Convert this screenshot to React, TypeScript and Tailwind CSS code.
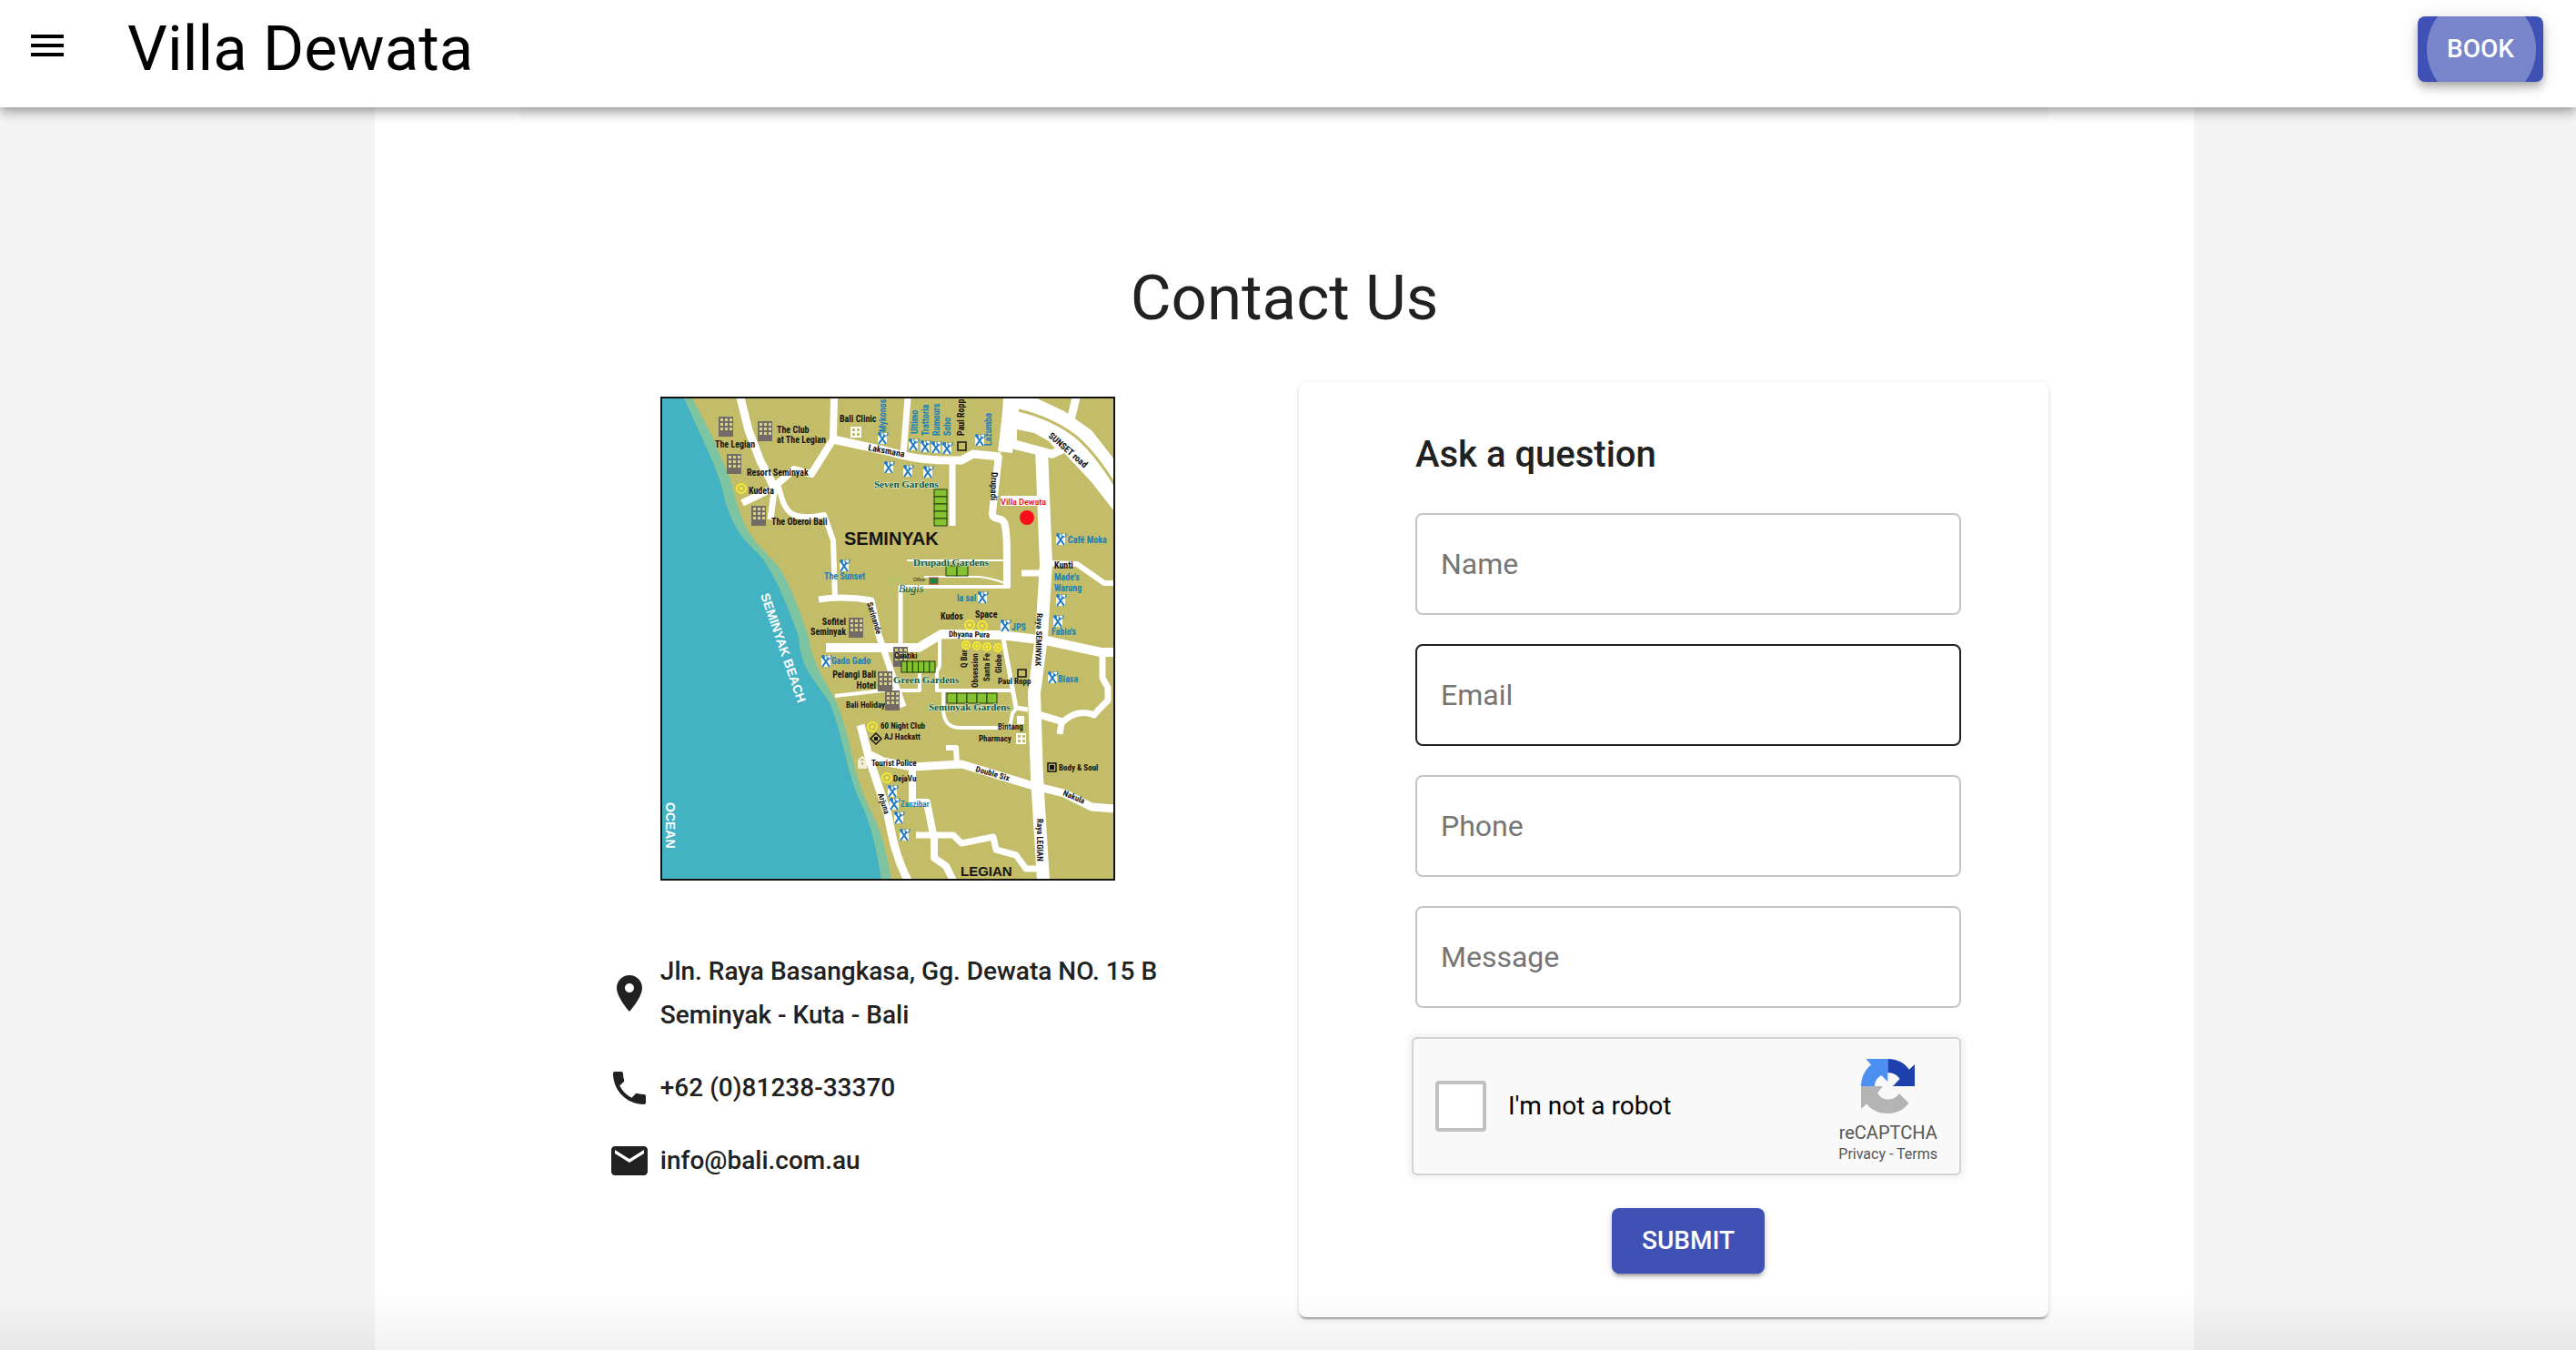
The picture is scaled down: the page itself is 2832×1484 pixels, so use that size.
import type { ReactNode } from "react";

const OLIVE = "#c3bc68";
const BLUE = "#1c7fb8";
const GREEN = "#0f5a44";
const BLACK = "#161412";

const ROADS: { d: string; w: number }[] = [
  { d: "M88 1L97 37L110 71L125 99", w: 9 },
  { d: "M90 117L123 101", w: 8 },
  { d: "M126 97L121 135", w: 7 },
  { d: "M130 99C134 116 138 128 150 131C158 133 166 133 180 130L190 158L192 222", w: 6 },
  { d: "M125 99L147 80L166 85L190 47L191 1", w: 8 },
  { d: "M174 223C192 220 210 220 232 224L240 262L267 341", w: 7 },
  { d: "M190 47L250 60C270 66 290 71 331 70L344 63L374 66", w: 9 },
  { d: "M272 1L267 64", w: 7 },
  { d: "M321 72V142", w: 7 },
  { d: "M386 1L379 61", w: 16 },
  { d: "M372 64L365 128C365 138 377 130 379 142C381 152 381 160 381 210", w: 8 },
  { d: "M271 180H379", w: 2 },
  { d: "M290 198H350C362 199 370 202 379 205", w: 2 },
  { d: "M262 209H384", w: 4 },
  { d: "M264 209V276", w: 5 },
  { d: "M457 1L450 30", w: 9 },
  { d: "M419 58L424 184L419 264L411 326L414 419L421 532", w: 14 },
  { d: "M424 183L458 184L488 205H499", w: 6 },
  { d: "M397 194H420", w: 7 },
  { d: "M182 276H284L309 261L374 262L424 268L484 281H499", w: 10 },
  { d: "M486 284V309L492 320V334L480 346L477 350C462 344 450 350 441 359L439 371", w: 7 },
  { d: "M414 349L441 357", w: 8 },
  { d: "M307 264V296L304 302V323H387", w: 4 },
  { d: "M377 266L391 342L404 344", w: 5 },
  { d: "M311 323V342C311 358 318 364 330 364H384L387 348L392 342", w: 4 },
  { d: "M285 304V323H244L192 329", w: 4 },
  { d: "M220 361L230 399L250 459C255 486 259 506 272 532", w: 9 },
  { d: "M231 394L245 401L277 407L331 404L407 427L444 436L474 451L499 453", w: 9 },
  { d: "M314 386H325L326 404", w: 6 },
  { d: "M277 409V446H293L301 486V507L314 516L322 532", w: 8 },
  { d: "M281 482H322L331 491L366 484L369 498L391 504L402 519H420", w: 7 },
];

const BUILDINGS = [
  [64, 22], [107, 27], [73, 63], [100, 120], [207, 243], [239, 302], [247, 323],
];

const RESTAURANTS = [
  [244, 46], [251, 78], [272, 82], [294, 83], [278, 53], [291, 55], [303, 56],
  [315, 57], [351, 48], [202, 186], [440, 157], [354, 221], [379, 252], [440, 224],
  [437, 247], [182, 291], [431, 309], [255, 434], [257, 448], [262, 463], [268, 482],
];

const CLUBS = [
  [89, 101, 5], [340, 251, 5], [354, 252, 5], [336, 273, 4], [348, 274, 4],
  [359, 275, 4], [371, 276, 4], [233, 363, 5], [249, 419, 5],
];

type Label = {
  t: string;
  x: number;
  y: number;
  c?: string;
  r?: number;
  s?: number;
  a?: "start" | "middle" | "end";
};

const LABELS: Label[] = [
  { t: "The Legian", x: 60, y: 56 },
  { t: "The Club", x: 128, y: 40 },
  { t: "at The Legian", x: 128, y: 51 },
  { t: "Resort Seminyak", x: 95, y: 87 },
  { t: "Kudeta", x: 97, y: 107 },
  { t: "The Oberoi Bali", x: 122, y: 141 },
  { t: "Bali Clinic", x: 197, y: 28 },
  { t: "Laksmana", x: 228, y: 59, r: 11 },
  { t: "Mykonos", x: 248, y: 39, r: -90, c: BLUE },
  { t: "Ultimo", x: 283, y: 41, r: -90, c: BLUE },
  { t: "Trattoria", x: 295, y: 43, r: -90, c: BLUE },
  { t: "Rumours", x: 307, y: 43, r: -90, c: BLUE },
  { t: "Soho", x: 319, y: 43, r: -90, c: BLUE },
  { t: "Paul Ropp", x: 334, y: 43, r: -90 },
  { t: "Lazumba", x: 364, y: 54, r: -90, c: BLUE },
  { t: "SUNSET road", x: 426, y: 44, r: 41 },
  { t: "Drupadi", x: 364, y: 83, r: 92 },
  { t: "Café Moka", x: 448, y: 161, c: BLUE },
  { t: "Kunti", x: 433, y: 189 },
  { t: "Made's", x: 433, y: 202, c: BLUE },
  { t: "Warung", x: 433, y: 214, c: BLUE },
  { t: "Fabio's", x: 430, y: 262, c: BLUE },
  { t: "The Sunset", x: 180, y: 201, c: BLUE },
  { t: "la sal", x: 326, y: 225, c: BLUE },
  { t: "Kudos", x: 308, y: 245 },
  { t: "Space", x: 346, y: 243 },
  { t: "JPS", x: 386, y: 257, c: BLUE },
  { t: "Dhyana Pura", x: 317, y: 264, r: 1, s: 9 },
  { t: "Sofitel", x: 204, y: 251, a: "end" },
  { t: "Seminyak", x: 204, y: 262, a: "end" },
  { t: "Sarinande", x: 227, y: 227, r: 73, s: 9 },
  { t: "Gado Gado", x: 188, y: 294, c: BLUE },
  { t: "Pelangi Bali", x: 237, y: 309, a: "end" },
  { t: "Hotel", x: 237, y: 321, a: "end" },
  { t: "Bali Holiday", x: 204, y: 342, s: 9 },
  { t: "Contiki", x: 257, y: 288, s: 9 },
  { t: "Q Bar", x: 337, y: 298, r: -90, s: 9 },
  { t: "Obsession", x: 349, y: 320, r: -90, s: 9 },
  { t: "Santa Fe", x: 362, y: 313, r: -90, s: 9 },
  { t: "Globe", x: 375, y: 304, r: -90, s: 9 },
  { t: "Paul Ropp", x: 371, y: 316, s: 9 },
  { t: "Biasa", x: 437, y: 314, c: BLUE },
  { t: "Raya SEMINYAK", x: 414, y: 238, r: 92, s: 9 },
  { t: "Bintang", x: 371, y: 366, s: 9 },
  { t: "Pharmacy", x: 350, y: 379, s: 9 },
  { t: "60 Night Club", x: 242, y: 365, s: 9 },
  { t: "AJ Hackatt", x: 246, y: 377, s: 9 },
  { t: "Tourist Police", x: 232, y: 406, s: 9 },
  { t: "DejaVu", x: 256, y: 423, s: 9 },
  { t: "Zanzibar", x: 264, y: 451, c: BLUE, s: 9 },
  { t: "Arjuna", x: 239, y: 437, r: 72, s: 9 },
  { t: "Double Six", x: 346, y: 412, r: 16, s: 9 },
  { t: "Body & Soul", x: 438, y: 411, s: 9 },
  { t: "Nakula", x: 442, y: 438, r: 23, s: 9 },
  { t: "Raya LEGIAN", x: 414, y: 464, r: 90, s: 9 },
];

const GARDENS: Label[] = [
  { t: "Seven Gardens", x: 235, y: 100, s: 11 },
  { t: "Drupadi Gardens", x: 278, y: 186, s: 11 },
  { t: "Green Gardens", x: 256, y: 315, s: 11 },
  { t: "Seminyak Gardens", x: 295, y: 345, s: 11 },
];

function Building({ x, y }: { x: number; y: number }) {
  return (
    <g>
      <rect x={x} y={y} width={16} height={22} fill="#736b66" />
      {[0, 1, 2].map((r) =>
        [0, 1, 2].map((c) => (
          <rect key={`${r}${c}`} x={x + 2 + c * 5} y={y + 2 + r * 5} width={3} height={3} fill="#d8d38c" />
        ))
      )}
    </g>
  );
}

function Cutlery({ x, y }: { x: number; y: number }) {
  return (
    <g>
      <rect x={x - 5} y={y - 6} width={10} height={12} fill="#f6f8f4" />
      <path d={`M${x - 3} ${y - 4}L${x + 4} ${y + 6}M${x + 3} ${y - 4}L${x - 4} ${y + 6}`} stroke="#1f78c4" strokeWidth={2} />
      <circle cx={x - 3} cy={y - 5} r={2} fill="#1f78c4" />
      <path d={`M${x + 1} ${y - 7}v3l2 2l3 -2v-3`} fill="none" stroke="#1f78c4" strokeWidth={1} />
    </g>
  );
}

function Plot({ x, y, w, h, n, vertical }: { x: number; y: number; w: number; h: number; n: number; vertical?: boolean }) {
  return (
    <g fill="#84c232" stroke="#20380f" strokeWidth={1}>
      {Array.from({ length: n }, (_, i) =>
        vertical ? (
          <rect key={i} x={x} y={y + (i * h) / n} width={w} height={h / n} />
        ) : (
          <rect key={i} x={x + (i * w) / n} y={y} width={w / n} height={h} />
        )
      )}
    </g>
  );
}

function MapDrawing() {
  return (
    <svg viewBox="0 0 500 532" className="block w-[500px] max-w-full" role="img" aria-label="Map of Seminyak">
      <rect width={500} height={532} fill={OLIVE} />
      <path
        d="M0 0H34L57 44L77 91C82 110 86 126 93 141C104 164 120 174 130 187C146 212 154 240 163 264C166 290 178 308 190 329C203 352 210 396 217 419C223 440 232 456 240 474C246 492 251 512 254 532H0Z"
        fill="#7cc4a2"
      />
      <path
        d="M0 0H25L53 61C60 78 65 90 68 101C72 120 78 138 90 154C98 165 106 170 113 179C130 204 142 236 152 264C154 290 160 298 167 309C178 326 184 332 187 339C196 362 198 376 202 389C207 410 212 428 220 446C232 470 238 500 243 532H0Z"
        fill="#43b2c3"
      />
      <g fill="none" stroke="#fff" strokeLinejoin="round">
        {ROADS.map((r) => (
          <path key={r.d} d={r.d} strokeWidth={r.w} />
        ))}
      </g>
      <path d="M377 0H410L444 16L474 37L499 69V126L474 94L444 62L431 68L381 56L374 61Z" fill="#fff" />
      <path d="M394 15Q431 24 457 44Q478 62 499 96" fill="none" stroke={OLIVE} strokeWidth={3} />
      <path d="M392 36L411 40L427 49L434 57L429 58L392 48Z" fill={OLIVE} />

      {BUILDINGS.map(([x, y]) => (
        <Building key={`${x}-${y}`} x={x} y={y} />
      ))}
      <Building x={256} y={275} />
      <Plot x={301} y={102} w={14} h={40} n={5} vertical />
      <Plot x={314} y={186} w={24} h={11} n={2} />
      <Plot x={265} y={291} w={37} h={12} n={6} />
      <Plot x={315} y={326} w={55} h={11} n={5} />
      {RESTAURANTS.map(([x, y]) => (
        <Cutlery key={`${x}-${y}`} x={x} y={y} />
      ))}
      {CLUBS.map(([x, y, r]) => (
        <g key={`${x}-${y}`}>
          <circle cx={x} cy={y} r={r} fill="none" stroke="#f5ea2c" strokeWidth={2} />
          <circle cx={x} cy={y} r={2} fill="#f5ea2c" />
        </g>
      ))}
      <rect x={296} y={199} width={9} height={7} fill="#128a4a" stroke="#c0392b" />
      <path d="M249 201H266M254 193V208" stroke="#a9c96a" strokeWidth={1} />
      <g fill="#fff">
        <rect x={209} y={33} width={12} height={12} />
        <rect x={391} y={370} width={11} height={12} />
        <rect x={392} y={351} width={8} height={9} />
      </g>
      <g fill={OLIVE}>
        {[[211, 35], [216, 35], [211, 40], [216, 40], [393, 372], [398, 372], [393, 377], [398, 377]].map(([x, y]) => (
          <rect key={`${x}-${y}`} x={x} y={y} width={3} height={3} />
        ))}
      </g>
      <g fill="none" stroke={BLACK} strokeWidth={1.5}>
        <rect x={327} y={50} width={9} height={9} />
        <rect x={393} y={300} width={9} height={8} />
        <rect x={426} y={403} width={9} height={9} />
        <path d="M237 370L243 376L237 382L231 376Z" />
      </g>
      <rect x={428} y={405} width={5} height={5} fill={BLACK} />
      <rect x={235} y={374} width={4} height={4} fill={BLACK} />
      <path d="M218 408V400L222 396L226 400V408ZM220 406H224V401H220Z" fill="none" stroke="#fff" strokeWidth={1.5} />

      <g fontFamily='"Liberation Sans Narrow", "Roboto Condensed", Roboto, sans-serif' fontWeight={700}>
        {LABELS.map((l) => (
          <text
            key={`${l.t}${l.x}`}
            x={l.x}
            y={l.y}
            fontSize={l.s ?? 10}
            fill={l.c ?? BLACK}
            textAnchor={l.a ?? "start"}
            transform={l.r ? `rotate(${l.r} ${l.x} ${l.y})` : undefined}
          >
            {l.t}
          </text>
        ))}
      </g>
      <g fontFamily='"Liberation Serif", serif' fontWeight={700} fill={GREEN} stroke="#e6efd8" strokeWidth={1} paintOrder="stroke">
        {GARDENS.map((l) => (
          <text key={l.t} x={l.x} y={l.y} fontSize={l.s}>
            {l.t}
          </text>
        ))}
      </g>
      <text x={262} y={215} fontSize={12} fontStyle="italic" fontFamily='"Liberation Serif", serif' fill={GREEN}>
        Bugis
      </text>
      <text x={278} y={203} fontSize={5} fontFamily='"Liberation Sans", sans-serif' fill={BLACK}>
        Office
      </text>
      <g fontFamily='"Liberation Sans", sans-serif' fontWeight={700}>
        <text x={202} y={163} fontSize={20} fill={BLACK}>SEMINYAK</text>
        <text x={330} y={527} fontSize={15} fill={BLACK}>LEGIAN</text>
        <g fill="#fff">
          <text x={110} y={218} fontSize={14} transform="rotate(71 110 218)">SEMINYAK BEACH</text>
          <text x={6} y={446} fontSize={14} transform="rotate(90 6 446)">OCEAN</text>
        </g>
        <rect x={374} y={109} width={54} height={11} fill="#fff" />
        <text x={374} y={119} fontSize={9} fontFamily="Roboto, sans-serif" fill="#e8202c">Villa Dewata</text>
      </g>
      <circle cx={403} cy={133} r={8} fill="#fc0d1b" />
      <rect x={1} y={1} width={498} height={530} fill="none" stroke="#14120f" strokeWidth={2} />
    </svg>
  );
}

function Icon({ d }: { d: string }) {
  return (
    <svg viewBox="0 0 24 24" className="size-12 shrink-0 fill-current" aria-hidden="true">
      <path d={d} />
    </svg>
  );
}

function ContactRow({ icon, children }: { icon: string; children: ReactNode }) {
  return (
    <li className="flex items-center gap-[10px]">
      <Icon d={icon} />
      <div className="text-[28px] leading-12 font-medium">{children}</div>
    </li>
  );
}

function RecaptchaLogo() {
  return (
    <svg viewBox="0 0 60 61" className="h-[61px] w-[60px]" aria-hidden="true">
      <path d="M29.3 0c10 0 18 4 23.7 11.7L59 6v24H35l7.5-8c-3-5-8-6.7-13.2-6.7z" fill="#1f41ad" />
      <path d="M29.3 0v25l-7-7c-5 3-7.300 7-7.300 12H0c0-9 4-18 11-23.500L5.500 0z" fill="#4d90f2" />
      <path d="M0 30h24l-6 7.500c3 5 7 7 11.500 7c5 0 9.500-2 12.500-6.500l10.500 10.500C47 56 39 60 29.500 60C20 60 12 57 6 49.500L0 55z" fill="#b4b4b4" />
    </svg>
  );
}

const FIELDS = [
  { id: "name", label: "Name", type: "text", border: "border-[#c4c4c4]" },
  { id: "email", label: "Email", type: "email", border: "border-[#212121]" },
  { id: "phone", label: "Phone", type: "tel", border: "border-[#c4c4c4]" },
  { id: "message", label: "Message", type: "text", border: "border-[#c4c4c4]" },
];

export default function App() {
  return (
    <div className="relative flex h-screen flex-col overflow-hidden bg-[#f4f4f4] font-['Roboto',sans-serif] text-[#212121]">
      <header className="relative z-10 flex shrink-0 items-start bg-white pt-[18px] pr-9 pb-7 pl-7 text-black shadow-[0_4px_8px_-2px_rgba(0,0,0,0.2),0_8px_10px_0_rgba(0,0,0,0.14),0_2px_20px_0_rgba(0,0,0,0.12)]">
        <button type="button" aria-label="Open menu" className="mt-2">
          <Icon d="M3 18h18v-2H3v2zm0-5h18v-2H3v2zm0-7v2h18V6H3z" />
        </button>
        <div className="ml-16 text-[69px] leading-[72px]">Villa Dewata</div>
        <button
          type="button"
          className="relative ml-auto h-[72px] w-[138px] overflow-hidden rounded-lg bg-[#3f51b5] text-[28px] font-medium text-white shadow-[0_4px_8px_-2px_rgba(0,0,0,0.2),0_8px_10px_0_rgba(0,0,0,0.14),0_2px_20px_0_rgba(0,0,0,0.12)]"
        >
          <span className="absolute -top-6 left-[10px] size-[120px] rounded-full bg-white/30" />
          <span className="relative">BOOK</span>
        </button>
      </header>

      <div className="flex grow justify-center pr-2">
        <main className="w-full max-w-[2000px] bg-white px-40">
          <div className="h-3 bg-[#fafafa]" />
          <h1 className="mt-[156px] text-center text-[69px] leading-[84px]">Contact Us</h1>
          <div className="mt-[50px] grid grid-cols-2 items-start">
            <section className="flex flex-col items-center pt-4 pr-11" aria-label="Location and contact details">
              <div className="flex flex-col">
                <div className="pl-[58px]">
                  <MapDrawing />
                </div>
                <ul className="mt-[76px] flex flex-col gap-8 self-start">
                  <ContactRow icon="M12 2C8.130 2 5 5.130 5 9c0 5.250 7 13 7 13s7-7.750 7-13c0-3.870-3.130-7-7-7zm0 9.500c-1.380 0-2.500-1.120-2.500-2.500s1.120-2.500 2.500-2.500 2.500 1.120 2.500 2.500-1.120 2.500-2.500 2.500z">
                    Jln. Raya Basangkasa, Gg. Dewata NO. 15 B
                    <br />
                    Seminyak - Kuta - Bali
                  </ContactRow>
                  <ContactRow icon="M6.620 10.790c1.440 2.830 3.760 5.140 6.590 6.590l2.200-2.200c.27-.27.67-.36 1.020-.24 1.120.37 2.330.57 3.570.57.55 0 1 .45 1 1V20c0 .55-.45 1-1 1-9.390 0-17-7.610-17-17 0-.55.45-1 1-1h3.500c.55 0 1 .45 1 1 0 1.250.2 2.450.57 3.570.11.35.03.74-.25 1.020l-2.200 2.200z">
                    +62 (0)81238-33370
                  </ContactRow>
                  <ContactRow icon="M20 4H4c-1.100 0-1.990.9-1.990 2L2 18c0 1.100.9 2 2 2h16c1.100 0 2-.9 2-2V6c0-1.100-.9-2-2-2zm0 4l-8 5-8-5V6l8 5 8-5v2z">
                    info@bali.com.au
                  </ContactRow>
                </ul>
              </div>
            </section>

            <section className="pl-4">
              <form className="flex flex-col rounded-lg py-12 pr-24 pl-32 shadow-[0_4px_2px_-2px_rgba(0,0,0,0.2),0_2px_2px_0_rgba(0,0,0,0.14),0_2px_6px_0_rgba(0,0,0,0.12)]">
                <h2 className="text-[40px] leading-16 font-medium">Ask a question</h2>
                <div className="mt-8 flex flex-col gap-8">
                  {FIELDS.map((f) => (
                    <input
                      key={f.id}
                      id={f.id}
                      type={f.type}
                      aria-label={f.label}
                      placeholder={f.label}
                      className={`h-28 w-full rounded-lg border-2 px-[26px] text-[32px] placeholder:text-[#757575] ${f.border}`}
                    />
                  ))}
                </div>
                <div className="mt-8 -ml-1 flex h-[152px] items-center rounded-md border-2 border-[#d3d3d3] bg-[#f9f9f9] px-6 shadow-[0_0_8px_2px_rgba(0,0,0,0.08)]">
                  <input
                    id="robot"
                    type="checkbox"
                    className="size-14 shrink-0 appearance-none rounded-sm border-4 border-[#c1c1c1] bg-white"
                  />
                  <label htmlFor="robot" className="ml-6 text-[28px] text-black">
                    I'm not a robot
                  </label>
                  <div className="ml-auto flex flex-col items-center self-start pt-[22px] text-[#555]">
                    <RecaptchaLogo />
                    <div className="mt-2 text-[20px] leading-6">reCAPTCHA</div>
                    <div className="text-base leading-6">
                      <a href="#privacy">Privacy</a> - <a href="#terms">Terms</a>
                    </div>
                  </div>
                </div>
                <button
                  type="submit"
                  className="mt-9 h-[72px] w-[168px] self-center rounded-lg bg-[#3f51b5] text-[28px] font-medium text-white shadow-[0_6px_2px_-4px_rgba(0,0,0,0.2),0_4px_4px_0_rgba(0,0,0,0.14),0_2px_10px_0_rgba(0,0,0,0.12)]"
                >
                  SUBMIT
                </button>
              </form>
            </section>
          </div>
        </main>
      </div>
      <div className="pointer-events-none absolute inset-x-0 bottom-0 h-16 bg-linear-to-b from-transparent to-black/5" />
    </div>
  );
}
